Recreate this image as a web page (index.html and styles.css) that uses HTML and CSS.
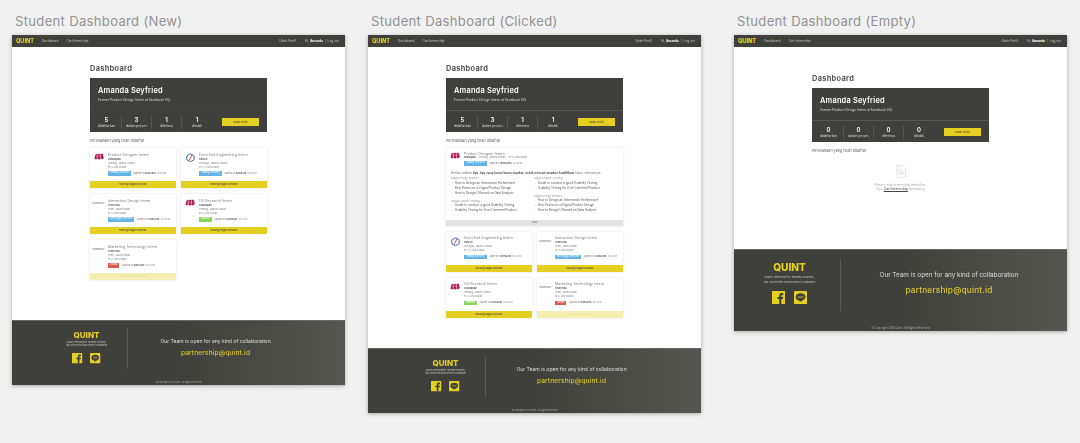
FILE: index.html
```html
<!DOCTYPE html>
<html lang="id">
<head>
    <meta charset="UTF-8">
    <meta name="viewport" content="width=device-width, initial-scale=1.0">
    <title>Student Dashboard</title>
    <link rel="stylesheet" href="styles.css">
</head>
<body>

    <svg class="defs" width="0" height="0">
        <symbol id="logo-pink" viewBox="0 0 30 20">
            <path fill="#b8235f" d="M3 6 L9 1 L12 4 L16 1 L19 4 L24 1 L28 3 L27 8 L30 12 L26 19 L20 17 L15 20 L11 17 L5 19 L1 16 L3 11 Z"/>
            <path fill="#fff" d="M8 7h4v3H8zM17 7h4v3h-4zM8 13h3v2H8zM18 13h3v2h-3z"/>
        </symbol>
        <symbol id="logo-hex" viewBox="0 0 24 26">
            <path fill="none" stroke="#3f5fb0" stroke-width="2.6" d="M12 2 L22 7.5 V18.5 L12 24 L2 18.5 V7.5 Z"/>
            <path stroke="#d8443c" stroke-width="2.6" d="M16 5 L8 21"/>
        </symbol>
        <symbol id="logo-wing" viewBox="0 0 10 6">
            <path fill="#4a9fd8" d="M0 5 L10 0 L6 6 Z"/>
        </symbol>
        <symbol id="icon-fb" viewBox="0 0 20 20">
            <rect width="20" height="20" fill="#e5d021"/>
            <path fill="#3f3f3b" d="M11 20 V12 H8.4 V9 H11 V6.8 C11 4.2 12.6 3 14.8 3 H17 V6 H15.4 C14.4 6 14.2 6.5 14.2 7.3 V9 H17 L16.6 12 H14.2 V20 Z"/>
        </symbol>
        <symbol id="icon-line" viewBox="0 0 20 20">
            <rect width="20" height="20" rx="2" fill="#e5d021"/>
            <path fill="#3f3f3b" d="M10 3.5 C5.6 3.5 2.5 6 2.5 9.2 C2.5 12 5 14.2 8.4 14.7 C9 14.9 8.7 16 8.6 16.6 C9.6 16.2 13 14.2 15.6 12.4 C16.8 11.4 17.5 10.4 17.5 9.2 C17.5 6 14.4 3.5 10 3.5 Z"/>
            <path stroke="#e5d021" stroke-width="1.3" d="M5.6 9.2h8.8"/>
        </symbol>
    </svg>

    <div class="page">

        <!-- new -->
        <section class="col">
            <h1 class="col-label">Student Dashboard (New)</h1>
            <div class="board board-new">
                <nav class="nav">
                    <span class="nav-logo">QUINT</span>
                    <a>Dashboard</a>
                    <a>Cari Internship</a>
                    <span class="nav-right">
                        <a>Ubah Profil</a>
                        <span class="nav-user">Hi, <b>Amanda</b> &nbsp;|&nbsp; Log out</span>
                    </span>
                </nav>
                <main class="main">
                    <h2 class="title">Dashboard</h2>
                    <div class="hero">
                        <div class="hero-top">
                            <div class="hero-name">Amanda Seyfried</div>
                            <div class="hero-sub">Former Product Design Intern at Facebook HQ</div>
                        </div>
                        <div class="hero-stats">
                            <div class="stat"><b>5</b><span>didaftarkan</span></div>
                            <div class="stat"><b>3</b><span>dalam proses</span></div>
                            <div class="stat"><b>1</b><span>diterima</span></div>
                            <div class="stat"><b>1</b><span>ditolak</span></div>
                            <button class="hero-btn">Ubah Profil</button>
                        </div>
                    </div>
                    <p class="applied-title">Perusahaan yang telah didaftar</p>
                    <div class="cards">
                        <div class="card">
                            <div class="card-body">
                                <div class="card-logo"><svg class="logo-pink"><use href="#logo-pink"/></svg></div>
                                <div class="card-info">
                                    <div class="card-title">Product Designer Intern</div>
                                    <div class="card-co">Bukalapak</div>
                                    <div class="card-meta">Kemang, Jakarta Selatan</div>
                                    <div class="card-meta">By 6 Juta Rupiah</div>
                                    <div class="card-status"><span class="badge badge-blue">Sedang Diseleksi</span><span class="card-date">Applied on <b>8/10/2018</b>, 10:12 PM</span></div>
                                </div>
                            </div>
                            <div class="card-bar">Hubungi bagian lamaran</div>
                        </div>
                        <div class="card">
                            <div class="card-body">
                                <div class="card-logo"><svg class="logo-hex"><use href="#logo-hex"/></svg></div>
                                <div class="card-info">
                                    <div class="card-title">Front End Engineering Intern</div>
                                    <div class="card-co">Kata.ai</div>
                                    <div class="card-meta">Kuningan, Jakarta Selatan</div>
                                    <div class="card-meta">By 5,5 Juta Rupiah</div>
                                    <div class="card-status"><span class="badge badge-blue">Sedang Diseleksi</span><span class="card-date">Applied on <b>8/11/2018</b>, 10:12 PM</span></div>
                                </div>
                            </div>
                            <div class="card-bar">Hubungi bagian lamaran</div>
                        </div>
                        <div class="card">
                            <div class="card-body">
                                <div class="card-logo"><span class="logo-tvlk">traveloka<svg class="logo-wing"><use href="#logo-wing"/></svg></span></div>
                                <div class="card-info">
                                    <div class="card-title">Interaction Design Intern</div>
                                    <div class="card-co">Traveloka</div>
                                    <div class="card-meta">Tebet, Jakarta Barat</div>
                                    <div class="card-meta">By 6 Juta Rupiah</div>
                                    <div class="card-status"><span class="badge badge-blue">Menunggu Interview</span><span class="card-date">Applied on <b>8/10/2018</b>, 10:12 PM</span></div>
                                </div>
                            </div>
                            <div class="card-bar">Hubungi bagian lamaran</div>
                        </div>
                        <div class="card">
                            <div class="card-body">
                                <div class="card-logo"><svg class="logo-pink"><use href="#logo-pink"/></svg></div>
                                <div class="card-info">
                                    <div class="card-title">UX Research Intern</div>
                                    <div class="card-co">Bukalapak</div>
                                    <div class="card-meta">Kemang, Jakarta Selatan</div>
                                    <div class="card-meta">By 6 Juta Rupiah</div>
                                    <div class="card-status"><span class="badge badge-green">Diterima</span><span class="card-date">Applied on <b>8/10/2018</b>, 10:12 PM</span></div>
                                </div>
                            </div>
                            <div class="card-bar">Hubungi bagian lamaran</div>
                        </div>
                        <div class="card">
                            <div class="card-body">
                                <div class="card-logo"><span class="logo-tvlk">traveloka<svg class="logo-wing"><use href="#logo-wing"/></svg></span></div>
                                <div class="card-info">
                                    <div class="card-title">Marketing Technology Intern</div>
                                    <div class="card-co">Traveloka</div>
                                    <div class="card-meta">Tebet, Jakarta Barat</div>
                                    <div class="card-meta">By 6 Juta Rupiah</div>
                                    <div class="card-status"><span class="badge badge-red">Ditolak</span><span class="card-date">Applied on <b>8/10/2018</b>, 10:12 PM</span></div>
                                </div>
                            </div>
                            <div class="card-bar card-bar-off">Hubungi bagian lamaran</div>
                        </div>
                    </div>
                </main>
                <footer class="footer">
                    <div class="footer-row">
                        <div class="footer-left">
                            <div class="footer-logo">QUINT</div>
                            <div class="footer-tag">Quality Internship for Talented Students,<br>Top Universities and Excellent Companies</div>
                            <div class="footer-icons">
                                <svg><use href="#icon-fb"/></svg>
                                <svg><use href="#icon-line"/></svg>
                            </div>
                        </div>
                        <div class="footer-right">
                            <div class="footer-text">Our Team is open for any kind of collaboration</div>
                            <div class="footer-mail">partnership@quint.id</div>
                        </div>
                    </div>
                    <div class="footer-copy">© Copyright 2018 Quint. All Rights Reserved</div>
                </footer>
            </div>
        </section>

        <!-- clicked -->
        <section class="col">
            <h1 class="col-label">Student Dashboard (Clicked)</h1>
            <div class="board board-clicked">
                <nav class="nav">
                    <span class="nav-logo">QUINT</span>
                    <a>Dashboard</a>
                    <a>Cari Internship</a>
                    <span class="nav-right">
                        <a>Ubah Profil</a>
                        <span class="nav-user">Hi, <b>Amanda</b> &nbsp;|&nbsp; Log out</span>
                    </span>
                </nav>
                <main class="main">
                    <h2 class="title">Dashboard</h2>
                    <div class="hero">
                        <div class="hero-top">
                            <div class="hero-name">Amanda Seyfried</div>
                            <div class="hero-sub">Former Product Design Intern at Facebook HQ</div>
                        </div>
                        <div class="hero-stats">
                            <div class="stat"><b>5</b><span>didaftarkan</span></div>
                            <div class="stat"><b>3</b><span>dalam proses</span></div>
                            <div class="stat"><b>1</b><span>diterima</span></div>
                            <div class="stat"><b>1</b><span>ditolak</span></div>
                            <button class="hero-btn">Ubah Profil</button>
                        </div>
                    </div>
                    <p class="applied-title">Perusahaan yang telah didaftar</p>
                    <div class="detail">
                        <div class="detail-head">
                            <div class="card-logo"><svg class="logo-pink"><use href="#logo-pink"/></svg></div>
                            <div class="card-info">
                                <div class="card-title">Product Designer Intern</div>
                                <div class="detail-line"><b>Bukalapak</b><span>Kemang, Jakarta Selatan</span><span>By 6 Juta Rupiah</span></div>
                                <div class="card-status"><span class="badge badge-blue">Sedang Diseleksi</span><span class="card-date">Applied on <b>8/10/2018</b>, 10:12 PM</span></div>
                            </div>
                        </div>
                        <p class="detail-intro">Berikut adalah <b>tips-tips yang harus kamu siapkan untuk mempersiapkan kualifikasi</b> kamu selanjutnya</p>
                        <div class="detail-cols">
                            <div>
                                <h4>Digital Design Reviews</h4>
                                <ul>
                                    <li>How to Design an Information Architecture</li>
                                    <li>Best Practices in Digital Product Design</li>
                                    <li>How to Design UI based on Data Analysis</li>
                                </ul>
                                <h4>Digital Usability Testing</h4>
                                <ul>
                                    <li>Guide to conduct a good Usability Testing</li>
                                    <li>Usability Testing for User Centered Product</li>
                                </ul>
                            </div>
                            <div>
                                <h4>Digital Usability Testing</h4>
                                <ul>
                                    <li>Guide to conduct a good Usability Testing</li>
                                    <li>Usability Testing for User Centered Product</li>
                                </ul>
                                <h4>Digital Design Reviews</h4>
                                <ul>
                                    <li>How to Design an Information Architecture</li>
                                    <li>Best Practices in Digital Product Design</li>
                                    <li>How to Design UI based on Data Analysis</li>
                                </ul>
                            </div>
                        </div>
                        <div class="detail-close">Tutup</div>
                    </div>
                    <div class="cards">
                        <div class="card">
                            <div class="card-body">
                                <div class="card-logo"><svg class="logo-hex"><use href="#logo-hex"/></svg></div>
                                <div class="card-info">
                                    <div class="card-title">Front End Engineering Intern</div>
                                    <div class="card-co">Kata.ai</div>
                                    <div class="card-meta">Kuningan, Jakarta Selatan</div>
                                    <div class="card-meta">By 5,5 Juta Rupiah</div>
                                    <div class="card-status"><span class="badge badge-blue">Sedang Diseleksi</span><span class="card-date">Applied on <b>8/11/2018</b>, 10:12 PM</span></div>
                                </div>
                            </div>
                            <div class="card-bar">Hubungi bagian lamaran</div>
                        </div>
                        <div class="card">
                            <div class="card-body">
                                <div class="card-logo"><span class="logo-tvlk">traveloka<svg class="logo-wing"><use href="#logo-wing"/></svg></span></div>
                                <div class="card-info">
                                    <div class="card-title">Interaction Design Intern</div>
                                    <div class="card-co">Traveloka</div>
                                    <div class="card-meta">Tebet, Jakarta Barat</div>
                                    <div class="card-meta">By 6 Juta Rupiah</div>
                                    <div class="card-status"><span class="badge badge-blue">Menunggu Interview</span><span class="card-date">Applied on <b>8/10/2018</b>, 10:12 PM</span></div>
                                </div>
                            </div>
                            <div class="card-bar">Hubungi bagian lamaran</div>
                        </div>
                        <div class="card">
                            <div class="card-body">
                                <div class="card-logo"><svg class="logo-pink"><use href="#logo-pink"/></svg></div>
                                <div class="card-info">
                                    <div class="card-title">UX Research Intern</div>
                                    <div class="card-co">Bukalapak</div>
                                    <div class="card-meta">Kemang, Jakarta Selatan</div>
                                    <div class="card-meta">By 6 Juta Rupiah</div>
                                    <div class="card-status"><span class="badge badge-green">Diterima</span><span class="card-date">Applied on <b>8/10/2018</b>, 10:12 PM</span></div>
                                </div>
                            </div>
                            <div class="card-bar">Hubungi bagian lamaran</div>
                        </div>
                        <div class="card">
                            <div class="card-body">
                                <div class="card-logo"><span class="logo-tvlk">traveloka<svg class="logo-wing"><use href="#logo-wing"/></svg></span></div>
                                <div class="card-info">
                                    <div class="card-title">Marketing Technology Intern</div>
                                    <div class="card-co">Traveloka</div>
                                    <div class="card-meta">Tebet, Jakarta Barat</div>
                                    <div class="card-meta">By 6 Juta Rupiah</div>
                                    <div class="card-status"><span class="badge badge-red">Ditolak</span><span class="card-date">Applied on <b>8/10/2018</b>, 10:12 PM</span></div>
                                </div>
                            </div>
                            <div class="card-bar card-bar-off">Hubungi bagian lamaran</div>
                        </div>
                    </div>
                </main>
                <footer class="footer">
                    <div class="footer-row">
                        <div class="footer-left">
                            <div class="footer-logo">QUINT</div>
                            <div class="footer-tag">Quality Internship for Talented Students,<br>Top Universities and Excellent Companies</div>
                            <div class="footer-icons">
                                <svg><use href="#icon-fb"/></svg>
                                <svg><use href="#icon-line"/></svg>
                            </div>
                        </div>
                        <div class="footer-right">
                            <div class="footer-text">Our Team is open for any kind of collaboration</div>
                            <div class="footer-mail">partnership@quint.id</div>
                        </div>
                    </div>
                    <div class="footer-copy">© Copyright 2018 Quint. All Rights Reserved</div>
                </footer>
            </div>
        </section>

        <!-- empty -->
        <section class="col">
            <h1 class="col-label">Student Dashboard (Empty)</h1>
            <div class="board board-empty">
                <nav class="nav">
                    <span class="nav-logo">QUINT</span>
                    <a>Dashboard</a>
                    <a>Cari Internship</a>
                    <span class="nav-right">
                        <a>Ubah Profil</a>
                        <span class="nav-user">Hi, <b>Amanda</b> &nbsp;|&nbsp; Log out</span>
                    </span>
                </nav>
                <main class="main">
                    <h2 class="title">Dashboard</h2>
                    <div class="hero">
                        <div class="hero-top">
                            <div class="hero-name">Amanda Seyfried</div>
                            <div class="hero-sub">Former Product Design Intern at Facebook HQ</div>
                        </div>
                        <div class="hero-stats">
                            <div class="stat"><b>0</b><span>didaftarkan</span></div>
                            <div class="stat"><b>0</b><span>dalam proses</span></div>
                            <div class="stat"><b>0</b><span>diterima</span></div>
                            <div class="stat"><b>0</b><span>ditolak</span></div>
                            <button class="hero-btn">Ubah Profil</button>
                        </div>
                    </div>
                    <p class="applied-title">Perusahaan yang telah didaftar</p>
                    <div class="empty">
                        <svg class="empty-icon" viewBox="0 0 20 26">
                            <path fill="#fafafa" stroke="#d8d8d8" d="M1 1 H14 L19 6 V25 H1 Z"/>
                            <path fill="none" stroke="#cfcfcf" stroke-width="1.2" d="M6 8 L13 14 L11 19 L5 16 Z M13 14 L16 18"/>
                        </svg>
                        <p>Belum ada internship terdaftar.<br>Ayo <a>Cari Internship</a> Sekarang</p>
                    </div>
                </main>
                <footer class="footer">
                    <div class="footer-row">
                        <div class="footer-left">
                            <div class="footer-logo">QUINT</div>
                            <div class="footer-tag">Quality Internship for Talented Students,<br>Top Universities and Excellent Companies</div>
                            <div class="footer-icons">
                                <svg><use href="#icon-fb"/></svg>
                                <svg><use href="#icon-line"/></svg>
                            </div>
                        </div>
                        <div class="footer-right">
                            <div class="footer-text">Our Team is open for any kind of collaboration</div>
                            <div class="footer-mail">partnership@quint.id</div>
                        </div>
                    </div>
                    <div class="footer-copy">© Copyright 2018 Quint. All Rights Reserved</div>
                </footer>
            </div>
        </section>

    </div>

</body>
</html>
```

FILE: styles.css
```css
html, body {
    margin: 0;
    height: 443px;
    overflow: hidden;
    background-color: #f1f1f1;
    font-family: "Inter", "Liberation Sans", sans-serif;
}
h1, h2, h4, p, ul {
    margin: 0;
    padding: 0;
}
.defs {
    position: absolute;
}
.page {
    display: flex;
    gap: 23px;
    padding-left: 12px;
}
.col {
    flex: none;
    width: 333px;
}
.col:nth-child(2) {
    margin-right: 10px;
}
.col-label {
    height: 35px;
    padding: 13px 0 0 3px;
    box-sizing: border-box;
    font-family: "Inter", sans-serif;
    font-size: 13.1px;
    line-height: 16px;
    font-weight: 400;
    letter-spacing: 0.3px;
    color: #929292;
}
.board {
    display: flex;
    flex-direction: column;
    background: #fff;
    box-shadow: 0 1px 4px rgba(0, 0, 0, 0.3);
    filter: blur(0.3px);
}
.board-new { height: 350px; filter: blur(0.45px); }
.board-clicked { height: 378px; }
.board-empty { height: 296px; }

/* nav */
.nav {
    display: flex;
    align-items: center;
    gap: 8px;
    height: 11.5px;
    padding: 0 6px 0 4px;
    background: #3f3f3b;
    color: #c8c8c4;
    font-size: 3.2px;
}
.nav-logo {
    width: 17px;
    margin-right: 1px;
    font-size: 5.6px;
    font-weight: 800;
    color: #e5d021;
}
.nav-right {
    display: flex;
    gap: 9px;
    margin-left: auto;
}
.nav-user b {
    color: #fff;
}

/* main */
.main {
    flex: 1;
    width: 177px;
    margin: 0 auto;
    padding-top: 17.5px;
}
.board-empty .main {
    padding-top: 27.5px;
}
.title {
    height: 10px;
    margin-bottom: 4px;
    font-size: 7.4px;
    line-height: 10px;
    font-weight: 700;
    letter-spacing: 0.3px;
    color: #555;
}
.hero {
    height: 54px;
    background: #3f3f3d;
    color: #fff;
}
.hero-top {
    height: 32.5px;
    box-sizing: border-box;
    padding: 9px 8px 0;
    border-bottom: 0.5px solid #565653;
}
.board-new .hero-top {
    border-bottom-color: #434341;
}
.hero-name {
    font-size: 7.4px;
    line-height: 8px;
    font-weight: 600;
    letter-spacing: 0.2px;
}
.hero-sub {
    margin-top: 2.5px;
    font-size: 3.3px;
    line-height: 4px;
    color: #ddd;
}
.hero-stats {
    display: flex;
    align-items: center;
    height: 21.5px;
    box-sizing: border-box;
    padding: 1.5px 0 0 2px;
}
.stat {
    width: 30px;
    height: 13px;
    border-right: 0.5px solid #555552;
    box-sizing: border-box;
    text-align: center;
}
.stat:nth-child(4) {
    border-right: none;
}
.stat b {
    display: block;
    font-size: 6px;
    line-height: 8px;
    font-weight: 600;
}
.stat span {
    display: block;
    font-size: 3.3px;
    line-height: 4.5px;
    color: #ddd;
}
.hero-btn {
    width: 37px;
    height: 8px;
    margin-left: 10px;
    padding: 0;
    border: none;
    background: #e5d021;
    color: #3f3f3b;
    font-family: inherit;
    font-size: 2.7px;
    font-weight: 500;
}
.applied-title {
    margin-top: 5.5px;
    font-size: 3.7px;
    line-height: 5px;
    color: #666;
}

/* cards */
.cards {
    display: grid;
    grid-template-columns: 85.5px 85.5px;
    gap: 6px 5.5px;
    margin-top: 5.5px;
}
.card {
    background: #fff;
    box-shadow: 0 0 3px rgba(0, 0, 0, 0.11);
}
.card-body {
    display: flex;
    height: 33px;
    box-sizing: border-box;
    padding-top: 4.5px;
}
.card-logo {
    display: flex;
    justify-content: center;
    width: 18px;
    flex: none;
    padding-top: 0.5px;
}
.logo-pink {
    width: 10px;
    height: 7px;
}
.logo-hex {
    width: 9px;
    height: 9.5px;
}
.logo-tvlk {
    display: flex;
    padding-top: 3px;
    font-size: 2.5px;
    line-height: 3px;
    color: #666;
}
.logo-wing {
    width: 2px;
    height: 1.5px;
}
.card-title {
    font-size: 3.4px;
    line-height: 4.5px;
    letter-spacing: 0.12px;
    color: #777;
}
.card-co {
    margin-top: 0.5px;
    font-size: 2.5px;
    line-height: 4px;
    font-weight: 600;
    color: #555;
}
.card-meta {
    font-size: 2.3px;
    line-height: 4px;
    color: #888;
}
.card-status {
    display: flex;
    align-items: center;
    gap: 2.5px;
    margin-top: 1.5px;
}
.badge {
    padding: 0 2px;
    height: 4.5px;
    font-size: 2.3px;
    line-height: 4.5px;
    color: #fff;
    white-space: nowrap;
}
.badge-blue { background: #63b3e8; }
.badge-green { background: #86d45e; }
.badge-red { background: #e2574c; }
.card-date {
    font-size: 2.2px;
    color: #777;
    white-space: nowrap;
}
.card-date b {
    color: #444;
}
.card-bar {
    height: 7px;
    background: #e5d021;
    font-size: 2.4px;
    line-height: 7px;
    text-align: center;
    color: #3f3f3b;
}
.card-bar-off {
    background: #f5efb4;
    color: #e8e0a0;
}

/* opened card */
.detail {
    height: 78px;
    margin: 5.5px 0 1px;
    display: flex;
    flex-direction: column;
    background: #fff;
    box-shadow: 0 0 3px rgba(0, 0, 0, 0.11);
}
.detail-head {
    display: flex;
    padding-top: 3.5px;
}
.detail-line {
    display: flex;
    gap: 3px;
    font-size: 2.3px;
    line-height: 4px;
    color: #888;
}
.detail-line b {
    color: #555;
}
.detail-head .card-status {
    margin-top: 1px;
}
.detail-intro {
    margin-top: 5px;
    padding: 0 5px;
    font-size: 3.1px;
    line-height: 4px;
    white-space: nowrap;
    color: #777;
}
.detail-intro b {
    color: #444;
    font-weight: 600;
}
.detail-cols {
    flex: 1;
    display: grid;
    grid-template-columns: 83px 1fr;
    padding: 1.5px 5px 0;
}
.detail-cols h4 {
    margin-bottom: 0.5px;
    font-size: 2.6px;
    line-height: 4px;
    font-weight: 400;
    color: #999;
}
.detail-cols ul {
    list-style: none;
    margin-bottom: 3px;
    padding-left: 1px;
}
.detail-cols li {
    font-size: 3px;
    line-height: 5px;
    color: #555;
}
.detail-cols li::before {
    content: "✓";
    display: inline-block;
    width: 3px;
    font-family: "DejaVu Sans", sans-serif;
    font-size: 2.4px;
    color: #777;
}
.detail-close {
    height: 6px;
    background: #e3e3e3;
    font-size: 2.4px;
    line-height: 6px;
    text-align: center;
    color: #777;
}

/* empty state */
.empty {
    margin-top: 12px;
    text-align: center;
}
.empty-icon {
    display: block;
    width: 10px;
    height: 13px;
    margin: 0 auto;
}
.empty p {
    margin-top: 5px;
    font-size: 3.5px;
    line-height: 4.5px;
    color: #aaa;
}
.empty a {
    color: #444;
    text-decoration: underline;
}

/* footer */
.footer {
    --left: 116px;
    --pad: 34px;
    --right: 42px;
    font-size: 10px;
    height: 6.5em;
    box-sizing: border-box;
    padding-top: 0.7em;
    background: linear-gradient(90deg, #3f3f3b 50%, #565650 100%);
    border-top: 0.5px solid #666;
    color: #ddd;
}
.board-clicked .footer {
    --left: 118px;
    --pad: 38px;
    --right: 44px;
}
.board-empty .footer {
    --left: 107px;
    --pad: 5px;
    --right: 10px;
    font-size: 12.6px;
}
.footer-row {
    display: flex;
    height: 4.1em;
}
.footer-left {
    width: var(--left);
    flex: none;
    box-sizing: border-box;
    padding: 0.2em 0 0 var(--pad);
    border-right: 0.5px solid #5c5c58;
    text-align: center;
}
.footer-logo {
    font-size: 0.8em;
    line-height: 1.3em;
    font-weight: 800;
    color: #e5d021;
}
.footer-tag {
    margin-top: 0.2em;
    font-size: 0.21em;
    line-height: 1.7em;
    color: #c8c8c4;
}
.footer-icons {
    display: flex;
    justify-content: center;
    gap: 0.75em;
    margin-top: 0.55em;
}
.footer-icons svg {
    width: 1.05em;
    height: 1.05em;
}
.footer-right {
    flex: 1;
    padding: 0.95em var(--right) 0 0;
    text-align: center;
}
.footer-text {
    font-size: 0.505em;
    line-height: 1.4em;
}
.footer-mail {
    margin-top: 0.65em;
    font-size: 0.66em;
    line-height: 1.4em;
    font-weight: 500;
    letter-spacing: 0.02em;
    color: #d8c62a;
}
.footer-copy {
    margin-top: 5.4em;
    font-size: 0.22em;
    text-align: center;
    color: #aaa;
}
```
